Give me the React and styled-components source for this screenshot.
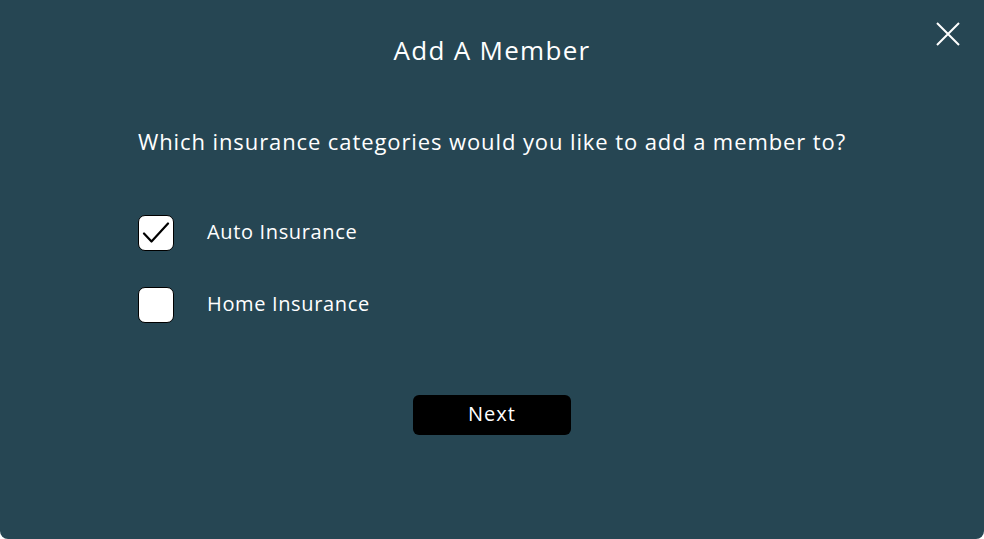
import React, { useState } from 'react';
import styled, { createGlobalStyle } from 'styled-components';

const GlobalStyle = createGlobalStyle`
  html, body {
    margin: 0;
    padding: 0;
    background: #ffffff;
  }
  * { box-sizing: border-box; }
`

const Modal = styled.div`
  position: relative;
  width: 984px;
  height: 539px;
  background-color: #264653;
  border-radius: 0 0 8px 8px;
  color: #ffffff;
  font-family: "Open Sans", Lato, sans-serif;
  display: flex;
  flex-direction: column;
  padding: 33px 138px 0 138px;
`
const Title = styled.h1`
  margin: 0;
  font-size: 26px;
  font-weight: 400;
  text-align: center;
  line-height: 34px;
  letter-spacing: 1.3px;
`
const CloseButton = styled.button`
  position: absolute;
  top: 22px;
  right: 24px;
  width: 24px;
  height: 24px;
  padding: 0;
  border: none;
  background: none;
  cursor: pointer;
`
const Question = styled.p`
  margin: 59px 0 0 0;
  font-size: 22px;
  line-height: 30px;
  letter-spacing: 0.9px;
  white-space: nowrap;
`
const Options = styled.div`
  display: flex;
  flex-direction: column;
  gap: 36px;
  margin-top: 59px;
`
const Row = styled.label`
  display: flex;
  align-items: center;
  gap: 33px;
  cursor: pointer;
`
const Box = styled.span`
  width: 36px;
  height: 36px;
  border-radius: 7px;
  background: #ffffff;
  border: 1px solid #000000;
  display: flex;
  align-items: center;
  justify-content: center;
`
const Label = styled.span`
  font-size: 20px;
  line-height: 26px;
  letter-spacing: 0.65px;
  padding-bottom: 2px;
`
const Footer = styled.div`
  display: flex;
  justify-content: center;
  margin-top: 72px;
`
const NextButton = styled.button`
  width: 158px;
  height: 40px;
  border: none;
  border-radius: 6px;
  background: #000000;
  color: #ffffff;
  font-family: "Open Sans", Lato, sans-serif;
  font-size: 20px;
  letter-spacing: 1px;
  padding: 0 0 3px 0;
  cursor: pointer;
`

const Check = () => (
  <svg width="28" height="22" viewBox="0 0 28 22" fill="none">
    <path d="M2 11.5 L9.5 19.5 L26 1.5" stroke="#000" strokeWidth="2.2" strokeLinecap="round" strokeLinejoin="round" />
  </svg>
)

const categories = ['Auto Insurance', 'Home Insurance']

export default function App() {
  const [checked, setChecked] = useState({ 'Auto Insurance': true })

  return (
    <>
      <GlobalStyle />
      <Modal>
        <CloseButton aria-label="Close">
          <svg width="24" height="24" viewBox="0 0 24 24">
            <path d="M1 1 L23 23 M23 1 L1 23" stroke="#fff" strokeWidth="2" />
          </svg>
        </CloseButton>
        <Title>Add A Member</Title>
        <Question>Which insurance categories would you like to add a member to?</Question>
        <Options>
          {categories.map(c => (
            <Row key={c} onClick={() => setChecked({ ...checked, [c]: !checked[c] })}>
              <Box>{checked[c] && <Check />}</Box>
              <Label>{c}</Label>
            </Row>
          ))}
        </Options>
        <Footer>
          <NextButton>Next</NextButton>
        </Footer>
      </Modal>
    </>
  )
}
